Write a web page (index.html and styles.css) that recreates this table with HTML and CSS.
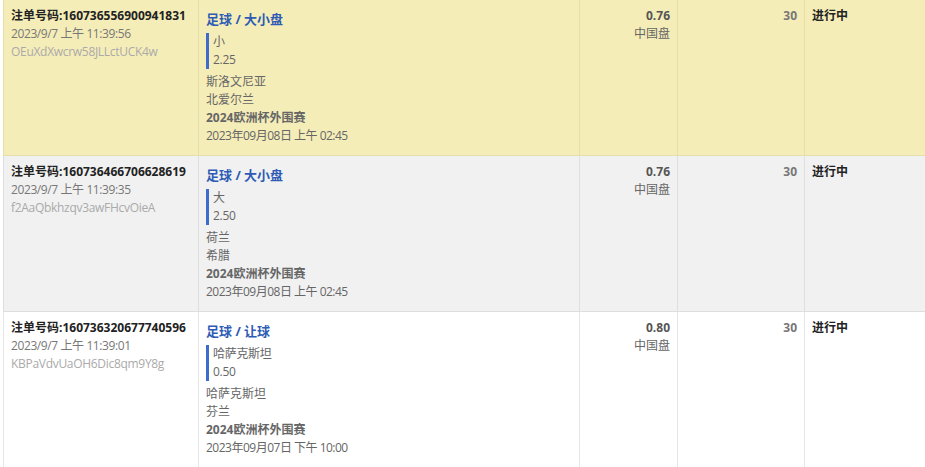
FILE: index.html
```html
<!DOCTYPE html>
<html lang="zh-CN">
<head>
    <meta charset="UTF-8">
    <title>注单记录</title>
    <link rel="stylesheet" href="styles.css">
</head>
<body>
    <table class="bets">
        <colgroup>
            <col class="c-id">
            <col class="c-detail">
            <col class="c-odds">
            <col class="c-stake">
            <col class="c-status">
        </colgroup>
        <tbody>
            <tr class="row-active">
                <td>
                    <div class="bet-no">注单号码:160736556900941831</div>
                    <div class="bet-time">2023/9/7 上午 11:39:56</div>
                    <div class="bet-hash">OEuXdXwcrw58JLLctUCK4w</div>
                </td>
                <td>
                    <div class="market">足球 / 大小盘</div>
                    <div class="pick">
                        <div>小</div>
                        <div>2.25</div>
                    </div>
                    <div>斯洛文尼亚</div>
                    <div>北爱尔兰</div>
                    <div class="league">2024欧洲杯外围赛</div>
                    <div class="kickoff">2023年09月08日 上午 02:45</div>
                </td>
                <td class="odds">
                    <div class="odds-val">0.76</div>
                    <div>中国盘</div>
                </td>
                <td class="stake">30</td>
                <td class="status">进行中</td>
            </tr>
            <tr class="row-alt">
                <td>
                    <div class="bet-no">注单号码:160736466706628619</div>
                    <div class="bet-time">2023/9/7 上午 11:39:35</div>
                    <div class="bet-hash">f2AaQbkhzqv3awFHcvOieA</div>
                </td>
                <td>
                    <div class="market">足球 / 大小盘</div>
                    <div class="pick">
                        <div>大</div>
                        <div>2.50</div>
                    </div>
                    <div>荷兰</div>
                    <div>希腊</div>
                    <div class="league">2024欧洲杯外围赛</div>
                    <div class="kickoff">2023年09月08日 上午 02:45</div>
                </td>
                <td class="odds">
                    <div class="odds-val">0.76</div>
                    <div>中国盘</div>
                </td>
                <td class="stake">30</td>
                <td class="status">进行中</td>
            </tr>
            <tr>
                <td>
                    <div class="bet-no">注单号码:160736320677740596</div>
                    <div class="bet-time">2023/9/7 上午 11:39:01</div>
                    <div class="bet-hash">KBPaVdvUaOH6Dic8qm9Y8g</div>
                </td>
                <td>
                    <div class="market">足球 / 让球</div>
                    <div class="pick">
                        <div>哈萨克斯坦</div>
                        <div>0.50</div>
                    </div>
                    <div>哈萨克斯坦</div>
                    <div>芬兰</div>
                    <div class="league">2024欧洲杯外围赛</div>
                    <div class="kickoff">2023年09月07日 下午 10:00</div>
                </td>
                <td class="odds">
                    <div class="odds-val">0.80</div>
                    <div>中国盘</div>
                </td>
                <td class="stake">30</td>
                <td class="status">进行中</td>
            </tr>
        </tbody>
    </table>
</body>
</html>
```

FILE: styles.css
```css
body {
    margin: 0;
    padding: 0 0 0 3px;
    overflow: hidden;
    background: #fff;
    font-family: "Open Sans", "Noto Sans CJK SC", sans-serif;
    font-size: 12px;
    color: #666;
}

.bets {
    border-collapse: collapse;
    table-layout: fixed;
    width: 1000px;
}

.c-id { width: 195px; }
.c-detail { width: 381px; }
.c-odds { width: 98px; }
.c-stake { width: 127px; }
.c-status { width: 199px; }

.bets td {
    vertical-align: top;
    padding: 7px 7px 10px;
    border: 1px solid #e6e6e6;
    border-top: none;
    line-height: 18px;
    height: 138px;
}

.row-active td {
    background: #f5edb8;
    border-color: #e6dfab;
}

.row-alt td {
    background: #f1f1f1;
    border-color: #dedede;
}

.bet-no {
    font-weight: bold;
    color: #222;
}

.bet-time {
    color: #777;
    letter-spacing: -0.4px;
}

.bet-hash {
    color: #aaa;
    letter-spacing: -0.3px;
}

.market {
    font-size: 13px;
    font-weight: bold;
    color: #2e5bb5;
    line-height: 20px;
    margin-top: 2px;
}

.pick {
    border-left: 3px solid #3d6ccc;
    padding-left: 4px;
    margin: 4px 0 4px;
    letter-spacing: -0.3px;
}

.league {
    font-weight: bold;
}

.kickoff {
    letter-spacing: -0.5px;
}

.odds {
    text-align: right;
}

.odds-val {
    font-weight: bold;
    color: #555;
}

.stake {
    text-align: right;
    font-weight: bold;
    color: #777;
}

.status {
    font-weight: bold;
    color: #222;
}
```
